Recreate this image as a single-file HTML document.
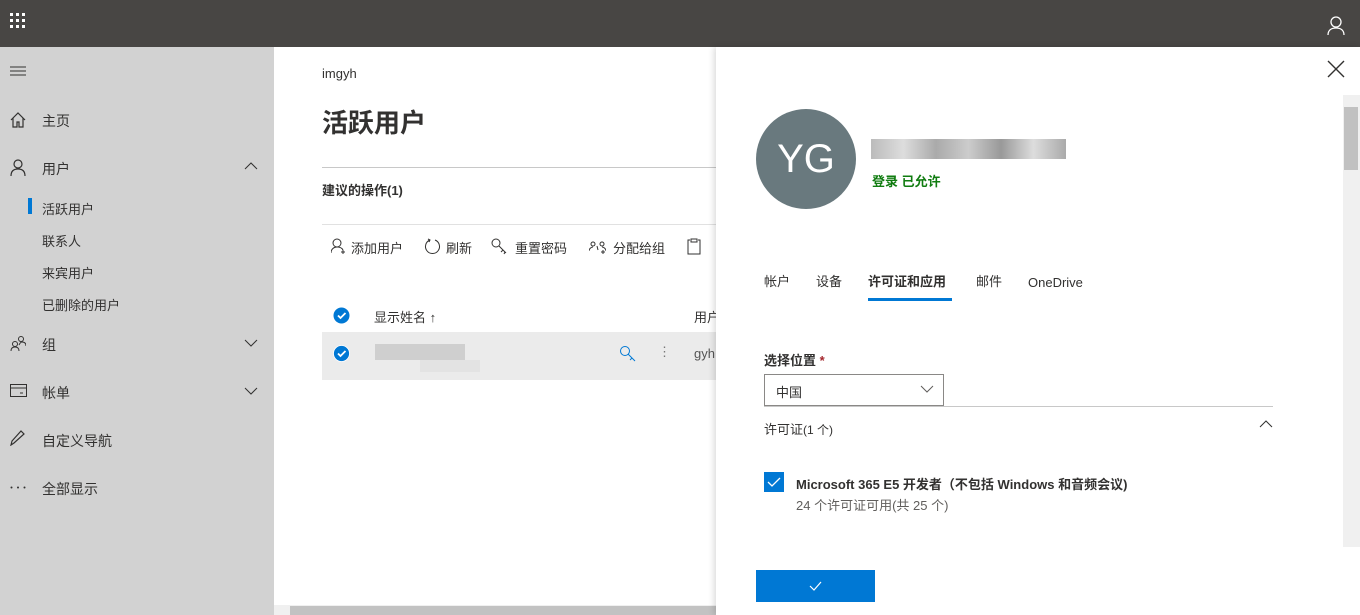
<!DOCTYPE html>
<html><head><meta charset="utf-8"><style>
*{margin:0;padding:0;box-sizing:border-box}
body{width:1360px;height:615px;overflow:hidden;position:relative;background:#fff;font-family:"Liberation Sans","Noto Sans CJK SC",sans-serif;color:#323130;font-size:14px}
.a{position:absolute;white-space:nowrap}
.top{left:0;top:0;width:1360px;height:47px;background:#484644}
.nav{left:0;top:47px;width:274px;height:568px;background:#d2d2d2}
.nav .t{position:absolute;left:42px;font-size:14px;color:#323130}
.nav .s{position:absolute;left:42px;font-size:13px;color:#323130}
.ic{position:absolute;left:10px}
.panel{left:716px;top:47px;width:644px;height:568px;background:#fff;box-shadow:-2px 0 6px rgba(0,0,0,.15)}
.tb{font-size:13px;top:238px}
.tab{font-size:13px;top:225px;line-height:20px;height:20px}
</style></head><body>
<div class="a top">
<svg class="a" style="left:10px;top:13px" width="18" height="18"><g fill="#fff"><rect x="0" y="0" width="3" height="3"/><rect x="6" y="0" width="3" height="3"/><rect x="12" y="0" width="3" height="3"/><rect x="0" y="6" width="3" height="3"/><rect x="6" y="6" width="3" height="3"/><rect x="12" y="6" width="3" height="3"/><rect x="0" y="12" width="3" height="3"/><rect x="6" y="12" width="3" height="3"/><rect x="12" y="12" width="3" height="3"/></g></svg>
<svg class="a" style="left:1326px;top:15px" width="20" height="20" fill="none" stroke="#fff" stroke-width="1.3"><circle cx="10" cy="7" r="5"/><path d="M2 20c0-5 3.5-7 8-7s8 2 8 7"/></svg>
</div>
<div class="a nav">
<svg class="ic" style="top:19px" width="16" height="10" stroke="#323130"><path d="M0 1h16M0 5h16M0 9h16"/></svg>
<svg class="ic" style="top:65px" width="16" height="16" fill="none" stroke="#323130" stroke-width="1.2"><path d="M1 8L8 1l7 7M3 6v9h4v-5h2v5h4V6"/></svg>
<span class="t" style="top:64px">主页</span>
<svg class="ic" style="top:112px" width="16" height="17" fill="none" stroke="#323130" stroke-width="1.2"><circle cx="8" cy="5" r="4"/><path d="M1 17c0-5 3-7 7-7s7 2 7 7"/></svg>
<span class="t" style="top:112px">用户</span>
<svg class="a" style="left:244px;top:115px" width="14" height="8" fill="none" stroke="#323130"><path d="M1 7l6-6 6 6"/></svg>
<div class="a" style="left:28px;top:151px;width:4px;height:16px;background:#0078d4"></div>
<span class="s" style="top:152px">活跃用户</span>
<span class="s" style="top:184px">联系人</span>
<span class="s" style="top:216px">来宾用户</span>
<span class="s" style="top:248px">已删除的用户</span>
<svg class="ic" style="top:288px" width="16" height="16" fill="none" stroke="#323130"><circle cx="5" cy="9" r="2.5"/><path d="M1 16c0-3 2-4 4-4s4 1 4 4"/><circle cx="11" cy="4" r="2.5"/><path d="M9 10c1-2 2-3 3-3 2 0 4 1 4 4"/></svg>
<span class="t" style="top:288px">组</span>
<svg class="a" style="left:244px;top:292px" width="14" height="8" fill="none" stroke="#323130"><path d="M1 1l6 6 6-6"/></svg>
<svg class="ic" style="top:337px" width="17" height="13" fill="none" stroke="#323130"><rect x=".5" y=".5" width="16" height="12"/><path d="M1 4h15M10 9h3"/></svg>
<span class="t" style="top:336px">帐单</span>
<svg class="a" style="left:244px;top:340px" width="14" height="8" fill="none" stroke="#323130"><path d="M1 1l6 6 6-6"/></svg>
<svg class="ic" style="top:383px" width="16" height="16" fill="none" stroke="#323130" stroke-width="1.2"><path d="M1 15l1-4 9-10 3 3-10 9z"/></svg>
<span class="t" style="top:384px">自定义导航</span>
<svg class="ic" style="top:439px" width="16" height="3" fill="#323130"><circle cx="1.5" cy="1.5" r="1"/><circle cx="8" cy="1.5" r="1"/><circle cx="14.5" cy="1.5" r="1"/></svg>
<span class="t" style="top:432px">全部显示</span>
</div>
<div class="a" style="left:322px;top:66px;font-size:13px">imgyh</div>
<div class="a" style="left:322px;top:103px;font-size:26px;font-weight:bold">活跃用户</div>
<div class="a" style="left:322px;top:167px;width:394px;height:1px;background:#c8c8c8"></div>
<div class="a" style="left:322px;top:180px;font-size:13px;font-weight:bold">建议的操作(1)</div>
<div class="a" style="left:322px;top:224px;width:394px;height:1px;background:#e1e1e1"></div>
<span class="a tb" style="left:351px">添加用户</span>
<span class="a tb" style="left:446px">刷新</span>
<span class="a tb" style="left:515px">重置密码</span>
<span class="a tb" style="left:613px">分配给组</span>
<svg class="a" style="left:331px;top:238px" width="16" height="16" fill="none" stroke="#323130"><circle cx="6" cy="5" r="4"/><path d="M0 15c0-4 3-6 6-6s5 1 6 3M12 12v4M10 14h4"/></svg>
<svg class="a" style="left:424px;top:238px" width="18" height="18" fill="none" stroke="#323130"><path d="M11 2a7 7 0 1 1-5 0M4 1l2 1-1 2"/></svg>
<svg class="a" style="left:491px;top:238px" width="17" height="17" fill="none" stroke="#323130"><circle cx="5" cy="5" r="4"/><path d="M8 8l7 7M12 12l-2 2M14 14l-1 2"/></svg>
<svg class="a" style="left:589px;top:240px" width="17" height="14" fill="none" stroke="#323130"><circle cx="4" cy="4" r="2"/><circle cx="13" cy="4" r="2"/><path d="M0 11c0-2 2-4 4-4M17 11c0-2-2-4-4-4M8 6l1 4M14 10v4M12 12h4"/></svg>
<svg class="a" style="left:687px;top:238px" width="14" height="17" fill="none" stroke="#323130"><path d="M3 2H1v14h12V2h-2M4 1h6v3H4z"/></svg>
<svg class="a" style="left:333px;top:307px" width="17" height="17"><circle cx="8.5" cy="8.5" r="8" fill="#0078d4"/><path d="M5 8.5l2.5 2.5 5-5" stroke="#fff" stroke-width="1.8" fill="none"/></svg>
<div class="a" style="left:374px;top:307px;font-size:13px">显示姓名 ↑</div>
<div class="a" style="left:694px;top:307px;font-size:13px">用户</div>
<div class="a" style="left:322px;top:332px;width:394px;height:48px;background:#ebebeb"></div>
<svg class="a" style="left:333px;top:345px" width="17" height="17"><circle cx="8.5" cy="8.5" r="8" fill="#0078d4"/><circle cx="8.5" cy="8.5" r="8" fill="none" stroke="#fff" stroke-width=".8"/><path d="M5 8.5l2.5 2.5 5-5" stroke="#fff" stroke-width="1.8" fill="none"/></svg>
<div class="a" style="left:375px;top:344px;width:90px;height:16px;background:#cfcfcf"></div>
<div class="a" style="left:420px;top:360px;width:60px;height:12px;background:#e3e3e3"></div>
<svg class="a" style="left:619px;top:345px" width="18" height="18" fill="none" stroke="#0078d4"><circle cx="6" cy="6" r="4.5"/><path d="M9 9l7 7M13 13l-2 2"/></svg>
<div class="a" style="left:658px;top:344px;font-size:13px;color:#777">⋮</div>
<div class="a" style="left:694px;top:346px;font-size:13px;color:#555">gyh</div>
<div class="a" style="left:274px;top:605px;width:442px;height:10px;background:#f0f0f0"></div>
<div class="a" style="left:290px;top:606px;width:426px;height:9px;background:#c2c2c2"></div>
<div class="a panel">
<svg class="a" style="left:611px;top:13px" width="18" height="18" stroke="#323130" stroke-width="1.4"><path d="M1 1l16 16M17 1L1 17"/></svg>
<div class="a" style="left:627px;top:48px;width:17px;height:452px;background:#f0f0f0"></div>
<div class="a" style="left:628px;top:60px;width:14px;height:63px;background:#c1c1c1"></div>
<div class="a" style="left:40px;top:62px;width:100px;height:100px;border-radius:50%;background:#69797e;color:#fff;font-size:40px;text-align:center;line-height:100px">YG</div>
<div class="a" style="left:155px;top:92px;width:195px;height:20px;background:linear-gradient(90deg,#bbb,#ddd,#aaa,#ccc,#999,#ddd,#aaa)"></div>
<div class="a" style="left:156px;top:124px;font-size:13px;color:#107c10;font-weight:bold">登录 已允许</div>
<span class="a tab" style="left:48px">帐户</span>
<span class="a tab" style="left:100px">设备</span>
<span class="a tab" style="left:152px;font-weight:bold">许可证和应用</span>
<span class="a tab" style="left:260px">邮件</span>
<span class="a tab" style="left:312px;top:226px">OneDrive</span>
<div class="a" style="left:152px;top:251px;width:84px;height:3px;background:#0078d4"></div>
<div class="a" style="left:48px;top:303px;font-size:13px;font-weight:bold">选择位置 <span style="color:#a4262c">*</span></div>
<div class="a" style="left:48px;top:327px;width:180px;height:32px;border:1px solid #8a8886;font-size:13px;padding:7px 11px">中国</div>
<svg class="a" style="left:204px;top:338px" width="14" height="8" fill="none" stroke="#605e5c"><path d="M1 1l6 6 6-6"/></svg>
<div class="a" style="left:48px;top:359px;width:509px;height:1px;background:#c8c8c8"></div>
<div class="a" style="left:48px;top:372px;font-size:13px">许可证<span style="font-size:12px">(1 个)</span></div>
<svg class="a" style="left:543px;top:373px" width="14" height="8" fill="none" stroke="#323130"><path d="M1 7l6-6 6 6"/></svg>
<div class="a" style="left:48px;top:425px;width:20px;height:20px;background:#0078d4"></div>
<svg class="a" style="left:51px;top:429px" width="14" height="12" fill="none" stroke="#fff" stroke-width="1.3"><path d="M1 6l4 4 8-8"/></svg>
<div class="a" style="left:80px;top:427px;font-size:13px;font-weight:bold">Microsoft 365 E5 开发者（不包括 Windows 和音频会议)</div>
<div class="a" style="left:80px;top:448px;font-size:13px;color:#605e5c">24 个许可证可用(共 25 个)</div>
<div class="a" style="left:40px;top:523px;width:119px;height:32px;background:#0078d4"></div>
<svg class="a" style="left:93px;top:534px" width="13" height="10" fill="none" stroke="#fff" stroke-width="1.2"><path d="M1 5l4 4 7-8"/></svg>
</div>
</body></html>
